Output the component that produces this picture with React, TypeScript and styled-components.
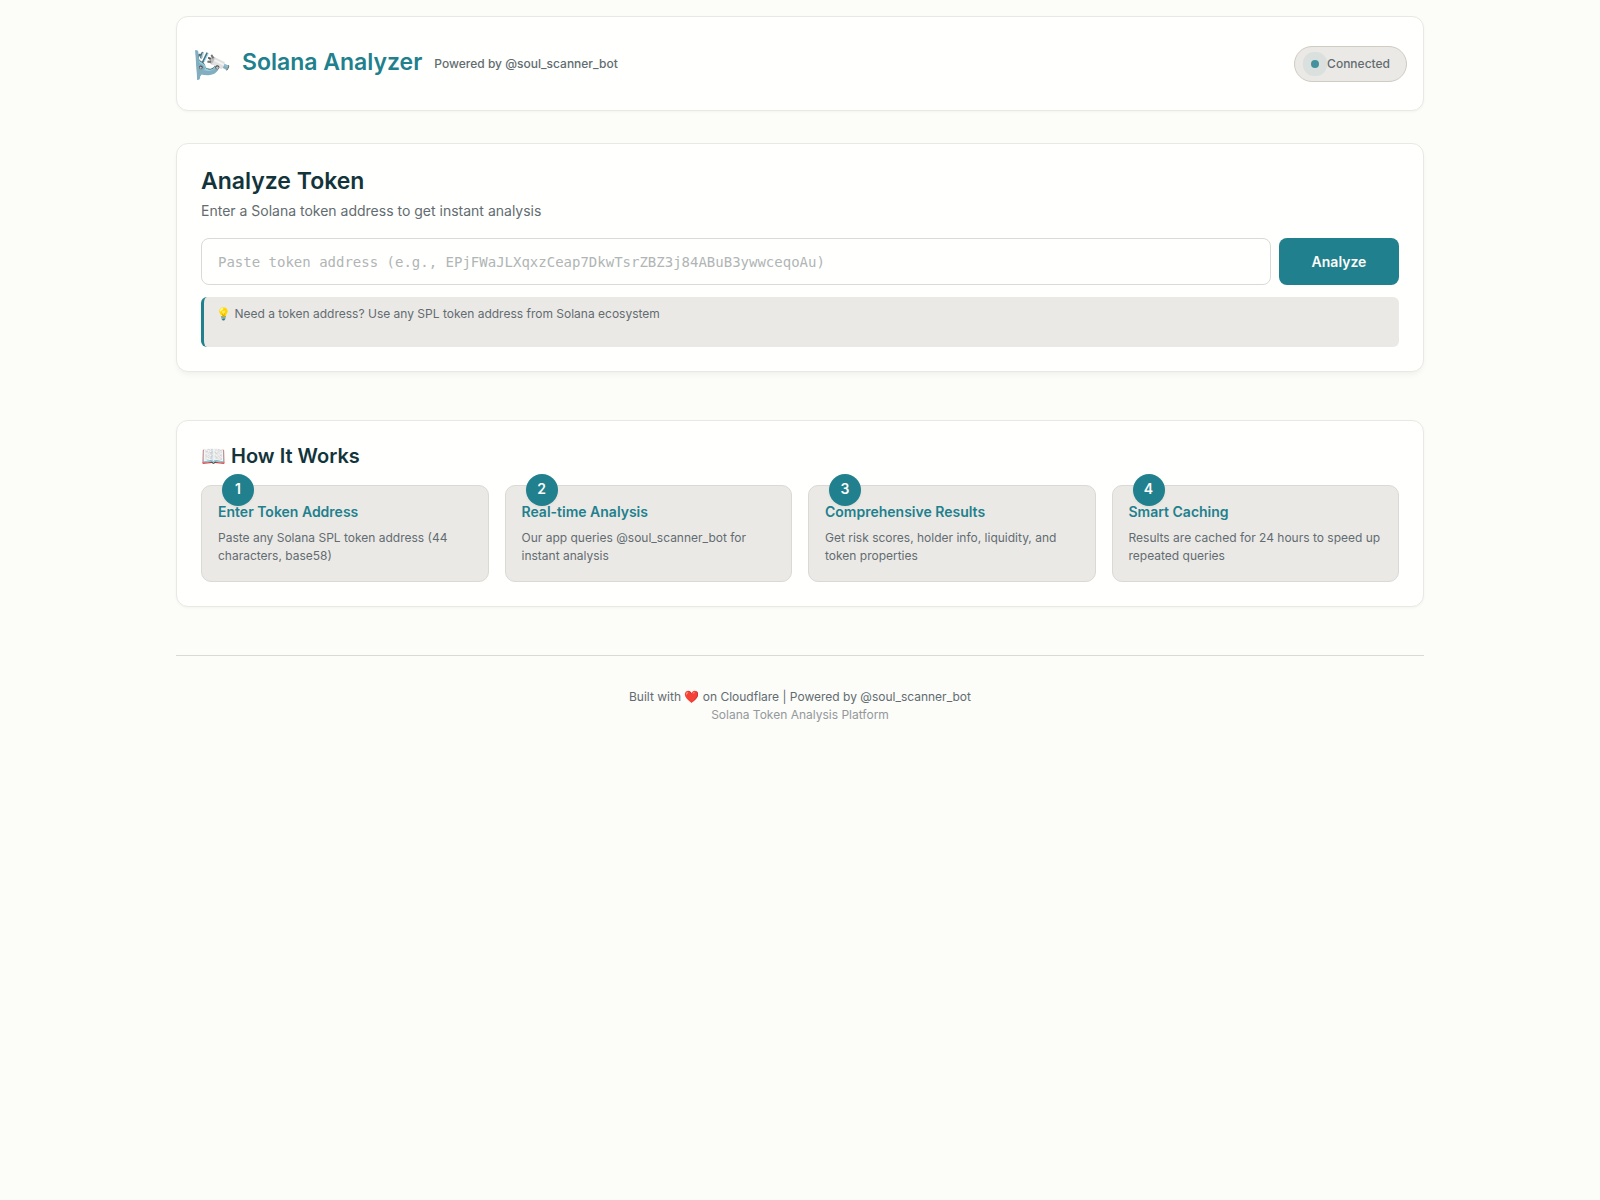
import React from 'react';
import styled, { createGlobalStyle } from 'styled-components';

const GlobalStyle = createGlobalStyle`
  *, *::before, *::after { box-sizing: border-box; }
  body {
    margin: 0;
    background: #fcfcf9;
    color: #13343b;
    font-family: Inter, "Liberation Sans", sans-serif;
    font-size: 14px;
    line-height: 21px;
  }
  h1, h2, h3, p { margin: 0; }
`;

const Page = styled.div`
  max-width: 1280px;
  margin: 0 auto;
  padding: 16px;
`;

const Panel = styled.section<{ $raised?: boolean }>`
  margin-bottom: 48px;
  padding: 24px;
  background: #fffffd;
  border: 1px solid #e9e8e5;
  border-radius: 12px;
  box-shadow: ${(p) =>
    p.$raised ? '0 4px 6px -1px rgba(0, 0, 0, 0.04), 0 2px 4px -1px rgba(0, 0, 0, 0.02)' : '0 1px 3px rgba(0, 0, 0, 0.04)'};
`;

const Header = styled.header`
  display: flex;
  align-items: center;
  justify-content: space-between;
  margin-bottom: 32px;
  padding: 29px 16px 28px;
  background: #fffffd;
  border: 1px solid #e9e8e5;
  border-radius: 12px;
  box-shadow: 0 1px 3px rgba(0, 0, 0, 0.04);
`;

const Brand = styled.div`
  display: flex;
  align-items: center;
  gap: 12px;
`;

const Logo = styled.span`
  width: 37px;
  height: 36px;
  font-size: 30px;
  line-height: 32px;
  text-align: center;
  transform: rotate(86deg);
`;

const BrandName = styled.h1`
  padding-bottom: 4px;
  color: #21808d;
  font-size: 23px;
  font-weight: 600;
  line-height: 30px;
`;

const Tagline = styled.span`
  color: #626c71;
  font-size: 12px;
  font-weight: 500;
  line-height: 18px;
`;

const Status = styled.div`
  display: flex;
  align-items: center;
  gap: 8px;
  padding: 8px 16px;
  background: #ebe9e6;
  border: 1px solid #d0cbc3;
  border-radius: 18px;
  color: #626c71;
  font-size: 12px;
  font-weight: 500;
  line-height: 18px;
`;

const Dot = styled.span`
  width: 8px;
  height: 8px;
  border-radius: 50%;
  background: #42929d;
  box-shadow: 0 0 0 8px #dae0de;
`;

const Title = styled.h2`
  margin-bottom: 6px;
  font-size: 23px;
  font-weight: 600;
  line-height: 26px;
`;

const Lead = styled.p`
  margin-bottom: 17px;
  color: #626c71;
`;

const Form = styled.form`
  display: flex;
  gap: 8px;
  margin-bottom: 12px;
`;

const AddressInput = styled.input`
  flex: 1;
  min-width: 0;
  height: 47px;
  padding: 0 16px;
  background: #fffffd;
  border: 1px solid #dadad8;
  border-radius: 8px;
  color: #13343b;
  font-family: "DejaVu Sans Mono", monospace;
  font-size: 14px;
  &::placeholder { color: #b0b5b6; opacity: 1; }
`;

const AnalyzeButton = styled.button`
  min-width: 120px;
  border: 0;
  border-radius: 8px;
  background: #21808d;
  color: #fcfcf9;
  font-family: inherit;
  font-size: 14px;
  font-weight: 600;
  cursor: pointer;
`;

const Hint = styled.div`
  min-height: 50px;
  padding: 8px 12px;
  background: #ebe9e6;
  border-left: 3px solid #21808d;
  border-radius: 6px;
  color: #626c71;
  font-size: 12px;
  line-height: 18px;
`;

const Heading = styled.h2`
  margin-bottom: 18px;
  font-size: 20px;
  font-weight: 600;
  line-height: 22px;
`;

const Steps = styled.div`
  display: grid;
  grid-template-columns: repeat(auto-fit, minmax(240px, 1fr));
  gap: 16px;
`;

const Step = styled.article`
  position: relative;
  padding: 16px;
  background: #ebe9e6;
  border: 1px solid #dad9d6;
  border-radius: 10px;
`;

const StepNumber = styled.span`
  position: absolute;
  top: -12px;
  left: 20px;
  width: 32px;
  height: 32px;
  border-radius: 50%;
  background: #21808d;
  box-shadow: 0 1px 3px rgba(0, 0, 0, 0.06);
  color: #fcfcf9;
  font-weight: 600;
  line-height: 30px;
  text-align: center;
`;

const StepTitle = styled.h3`
  position: relative;
  margin-bottom: 8px;
  color: #21808d;
  font-size: 14px;
  font-weight: 600;
  line-height: 19px;
`;

const StepText = styled.p`
  color: #626c71;
  font-size: 12px;
  line-height: 18px;
`;

const Footer = styled.footer`
  padding: 32px 16px;
  border-top: 1px solid #d9dad6;
  color: #626c71;
  font-size: 12px;
  line-height: 18px;
  text-align: center;
`;

const FooterNote = styled.p`
  color: #94999b;
`;

const steps = [
  { title: 'Enter Token Address', text: 'Paste any Solana SPL token address (44 characters, base58)' },
  { title: 'Real-time Analysis', text: 'Our app queries @soul_scanner_bot for instant analysis' },
  { title: 'Comprehensive Results', text: 'Get risk scores, holder info, liquidity, and token properties' },
  { title: 'Smart Caching', text: 'Results are cached for 24 hours to speed up repeated queries' },
];

export default function App() {
  return (
    <Page>
      <GlobalStyle />
      <Header>
        <Brand>
          <Logo>🔬</Logo>
          <BrandName>Solana Analyzer</BrandName>
          <Tagline>Powered by @soul_scanner_bot</Tagline>
        </Brand>
        <Status>
          <Dot />
          Connected
        </Status>
      </Header>
      <main>
        <Panel $raised>
          <Title>Analyze Token</Title>
          <Lead>Enter a Solana token address to get instant analysis</Lead>
          <Form onSubmit={(e) => e.preventDefault()}>
            <AddressInput
              type="text"
              aria-label="Token address"
              placeholder="Paste token address (e.g., EPjFWaJLXqxzCeap7DkwTsrZBZ3j84ABuB3ywwceqoAu)"
            />
            <AnalyzeButton type="submit">Analyze</AnalyzeButton>
          </Form>
          <Hint>💡 Need a token address? Use any SPL token address from Solana ecosystem</Hint>
        </Panel>
        <Panel>
          <Heading>📖 How It Works</Heading>
          <Steps>
            {steps.map((step, i) => (
              <Step key={step.title}>
                <StepNumber>{i + 1}</StepNumber>
                <StepTitle>{step.title}</StepTitle>
                <StepText>{step.text}</StepText>
              </Step>
            ))}
          </Steps>
        </Panel>
      </main>
      <Footer>
        <p>Built with ❤️ on Cloudflare | Powered by @soul_scanner_bot</p>
        <FooterNote>Solana Token Analysis Platform</FooterNote>
      </Footer>
    </Page>
  );
}
